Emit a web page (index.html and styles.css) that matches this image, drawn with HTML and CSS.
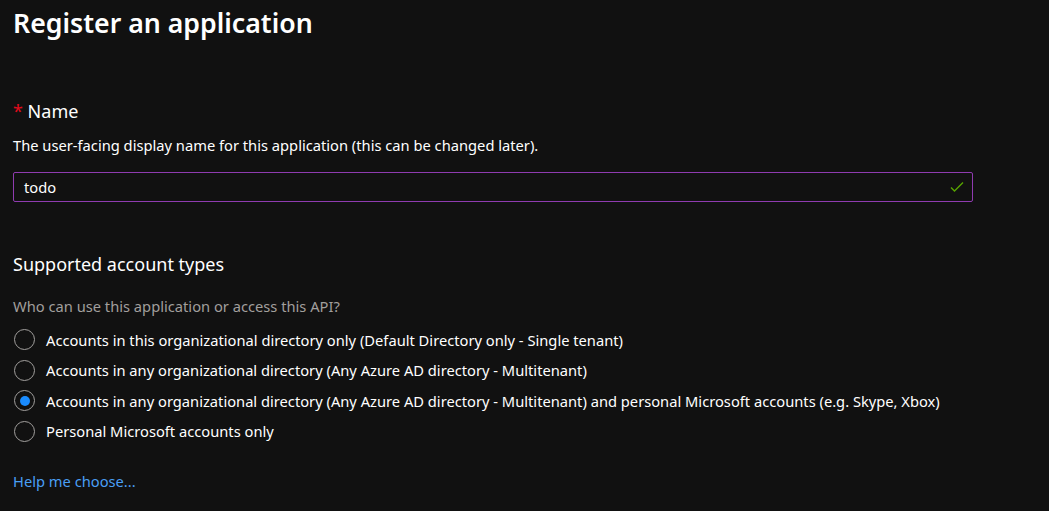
FILE: index.html
```html
<!DOCTYPE html>
<html lang="en">
<head>
<meta charset="utf-8">
<title>Register an application</title>
<link rel="stylesheet" href="styles.css">
</head>
<body>
<main class="page">
  <h1 class="title">Register an application</h1>

  <section class="field">
    <div class="label"><span class="req">*</span> Name</div>
    <p class="desc">The user-facing display name for this application (this can be changed later).</p>
    <div class="input">
      <span class="value">todo</span>
      <svg class="check" width="14" height="12" viewBox="0 0 14 12" aria-hidden="true">
        <path d="M1 6.5 L4.5 10 L13 1.5" fill="none" stroke="#57a300" stroke-width="1.4"/>
      </svg>
    </div>
  </section>

  <section class="accounts">
    <h2 class="subtitle">Supported account types</h2>
    <p class="question">Who can use this application or access this API?</p>
    <ul class="radios">
      <li class="radio"><span class="dot"></span>Accounts in this organizational directory only (Default Directory only - Single tenant)</li>
      <li class="radio"><span class="dot"></span>Accounts in any organizational directory (Any Azure AD directory - Multitenant)</li>
      <li class="radio checked"><span class="dot"></span>Accounts in any organizational directory (Any Azure AD directory - Multitenant) and personal Microsoft accounts (e.g. Skype, Xbox)</li>
      <li class="radio"><span class="dot"></span>Personal Microsoft accounts only</li>
    </ul>
    <a class="help" href="#">Help me choose...</a>
  </section>
</main>
</body>
</html>
```
FILE: styles.css
```css
html, body {
  margin: 0;
  padding: 0;
  background: #111111;
  color: #ffffff;
  font-family: "Noto Sans", "Open Sans", sans-serif;
}
.page {
  padding: 0 13px;
  width: 960px;
}
.title {
  margin: 0;
  padding-top: 4px;
  font-size: 26.7px;
  font-weight: 600;
  line-height: 38px;
}
.field {
  margin-top: 57px;
}
.label {
  font-size: 18px;
  line-height: 24px;
  color: #ffffff;
}
.req {
  color: #e00b1c;
}
.desc {
  margin: 12px 0 0;
  font-size: 14.7px;
  line-height: 20px;
  color: #ffffff;
}
.input {
  margin-top: 17px;
  height: 28px;
  border: 1px solid #8f3bb0;
  border-radius: 2px;
  display: flex;
  align-items: center;
  justify-content: space-between;
  padding: 0 8px 0 10px;
}
.value {
  font-size: 14.7px;
}
.accounts {
  margin-top: 50px;
}
.subtitle {
  margin: 0;
  font-size: 18px;
  font-weight: 400;
  line-height: 24px;
}
.question {
  margin: 20px 0 0;
  font-size: 14.7px;
  line-height: 20px;
  color: #a19f9d;
}
.radios {
  list-style: none;
  margin: 13px 0 0;
  padding: 0;
  display: flex;
  flex-direction: column;
  gap: 9.67px;
}
.radio {
  display: flex;
  align-items: center;
  gap: 11px;
  font-size: 14.7px;
  line-height: 20px;
  padding-left: 1px;
}
.dot {
  width: 19px;
  height: 19px;
  border: 1px solid #a19f9d;
  border-radius: 50%;
  display: flex;
  align-items: center;
  justify-content: center;
  flex: none;
}
.checked .dot::after {
  content: "";
  width: 10px;
  height: 10px;
  border-radius: 50%;
  background: #1a8cff;
}
.help {
  display: inline-block;
  margin-top: 29px;
  font-size: 14.7px;
  line-height: 20px;
  color: #4a9ff5;
  text-decoration: none;
}
```
